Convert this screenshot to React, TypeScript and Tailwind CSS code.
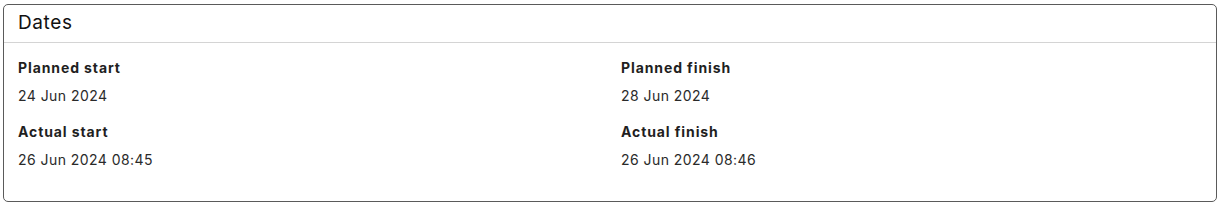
const dates = [
  { label: 'Planned start', value: '24 Jun 2024' },
  { label: 'Planned finish', value: '28 Jun 2024' },
  { label: 'Actual start', value: '26 Jun 2024 08:45' },
  { label: 'Actual finish', value: '26 Jun 2024 08:46' },
]

export default function App() {
  return (
    <div className="bg-white w-[1222px] h-[205px] pl-[3px] pt-[4px] font-['Inter',sans-serif] text-[#1f1f1f]">
      <div className="w-[1214px] h-[198px] border border-[#5a5a5a] rounded-[5px]">
        <div className="h-[38px] border-b border-[#d4d4d4] px-[14px] flex items-center">
          <h2 className="text-[19px] tracking-[0.6px] text-[#111]">Dates</h2>
        </div>
        <div className="grid grid-cols-2 gap-x-[22px] gap-y-[16px] px-[14px] pt-[15px]">
          {dates.map((d) => (
            <div key={d.label}>
              <div className="text-[14px] leading-[20px] font-bold tracking-[0.9px]">{d.label}</div>
              <div className="mt-[8px] text-[14px] leading-[20px] tracking-[0.45px] text-[#2a2a2a]">{d.value}</div>
            </div>
          ))}
        </div>
      </div>
    </div>
  )
}
